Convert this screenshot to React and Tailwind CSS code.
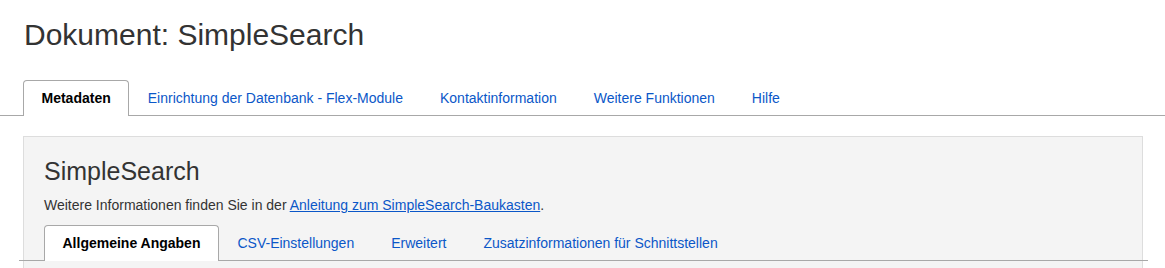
const mainTabs = [
  "Metadaten",
  "Einrichtung der Datenbank - Flex-Module",
  "Kontaktinformation",
  "Weitere Funktionen",
  "Hilfe",
];

const subTabs = [
  "Allgemeine Angaben",
  "CSV-Einstellungen",
  "Erweitert",
  "Zusatzinformationen für Schnittstellen",
];

function Tab({ label, active }) {
  return (
    <li
      className={`-mb-px flex h-[36px] items-center rounded-t-[4px] border border-b-0 px-[17.5px] text-[14px] ${
        active
          ? "border-[#a8a8a8] bg-white font-bold text-black"
          : "border-transparent text-[#0b57c8]"
      }`}
    >
      {label}
    </li>
  );
}

export default function App() {
  return (
    <div
      className="min-h-[268px] bg-white text-[#333]"
      style={{ fontFamily: '"Liberation Sans", Arial, sans-serif' }}
    >
      <h1 className="pl-[24px] pt-[17px] text-[30px] leading-[36px] text-[#333]">
        Dokument: SimpleSearch
      </h1>

      <ul className="mt-[27px] flex border-b border-[#a8a8a8] pl-[23px]">
        {mainTabs.map((t, i) => (
          <Tab key={t} label={t} active={i === 0} />
        ))}
      </ul>

      <div className="ml-[23px] mr-[22px] mt-[20px] border border-[#dddddd] bg-[#f4f4f4] px-[20px] pt-[20px]">
        <h2 className="text-[25px] leading-[28px] text-[#333]">SimpleSearch</h2>
        <p className="mt-[11px] text-[14px] leading-[18px] text-[#333]">
          Weitere Informationen finden Sie in der{" "}
          <a href="#" className="text-[#0b57c8] underline">
            Anleitung zum SimpleSearch-Baukasten
          </a>
          .
        </p>
        <ul className="-ml-[25px] -mr-[26px] mt-[11px] flex border-b border-[#a8a8a8] pl-[25px]">
          {subTabs.map((t, i) => (
            <Tab key={t} label={t} active={i === 0} />
          ))}
        </ul>
        <div className="h-[20px]" />
      </div>
    </div>
  );
}
